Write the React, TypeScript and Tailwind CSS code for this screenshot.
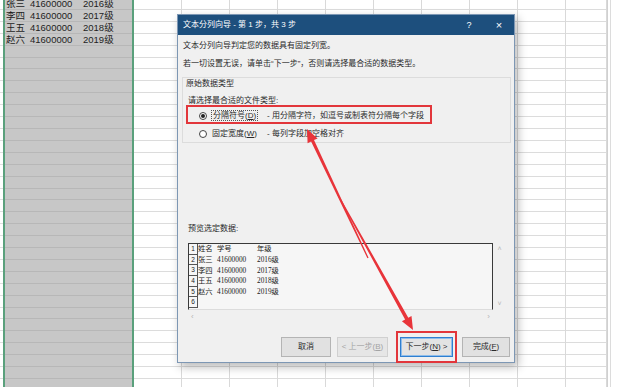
import React from "react"

const ROWS = Array.from({ length: 33 })
const sheetData: Record<number, [string, string, string]> = {
  0: ["张三", "41600000", "2016级"],
  1: ["李四", "41600000", "2017级"],
  2: ["王五", "41600000", "2018级"],
  3: ["赵六", "41600000", "2019级"],
}
const plainCols = [48, 48, 48, 48, 48, 48, 48, 48, 48, 41]

const preview: [string, string, string][] = [
  ["姓名", "学号", "年级"],
  ["张三", "41600000", "2016级"],
  ["李四", "41600000", "2017级"],
  ["王五", "41600000", "2018级"],
  ["赵六", "41600000", "2019级"],
  ["", "", ""],
]

const Sheet = () => (
  <div className="flex -mt-[2px]">
    <div className="w-[3px] shrink-0">
      {ROWS.map((_, i) => (
        <div key={i} className="h-[11.92px] border-b border-[#dedede]" />
      ))}
    </div>
    <div className="w-[131px] shrink-0 bg-[#c7c7c7] border-x-2 border-[#5aa07c]">
      {ROWS.map((_, i) => (
        <div
          key={i}
          className="h-[11.92px] border-b border-[#b7b7b7] flex items-end pl-[1px] text-[9.5px] leading-[11px] text-[#1e1e1e]"
        >
          {sheetData[i] && (
            <>
              <span className="w-[24px]">{sheetData[i][0]}</span>
              <span className="w-[53px]">{sheetData[i][1]}</span>
              <span>{sheetData[i][2]}</span>
            </>
          )}
        </div>
      ))}
    </div>
    {plainCols.map((w, c) => (
      <div key={c} className="shrink-0 border-r border-[#d9d9d9]" style={{ width: w }}>
        {ROWS.map((_, i) => (
          <div key={i} className="h-[11.92px] border-b border-[#dcdcdc]" />
        ))}
      </div>
    ))}
    <div className="w-[13px] shrink-0 border-l border-[#d0d0d0]">
      <div className="h-full w-[3px] border-r border-[#dcdcdc]" />
    </div>
  </div>
)

const Radio = ({ checked }: { checked?: boolean }) => (
  <span className="w-[8px] h-[8px] rounded-full border border-[#444] bg-white flex items-center justify-center shrink-0">
    {checked && <span className="w-[4px] h-[4px] rounded-full bg-[#222]" />}
  </span>
)

const Btn = ({
  children,
  className,
}: {
  children: React.ReactNode
  className: string
}) => (
  <div className={`h-[20px] flex items-center justify-center text-[8px] leading-[12px] ${className}`}>
    {children}
  </div>
)

const Dialog = () => (
  <div className="absolute left-[177px] top-[14px] w-[338px] h-[349px] border border-[#7d97b4] bg-[#f0f0f0] shadow-[3px_4px_9px_rgba(0,0,0,0.28)] flex flex-col text-[#2a2a2a] text-[8px] leading-[12px]">
    <div className="h-[20px] bg-[#1d4f7d] flex items-center pl-[5px] text-white shrink-0">
      <span>文本分列向导 - 第 1 步，共 3 步</span>
      <span className="ml-auto w-[10px] text-center text-[9px]">?</span>
      <span className="ml-[20px] mr-[10px] w-[10px] text-center text-[11px]">×</span>
    </div>

    <div className="pl-[5px] pt-[5px]">文本分列向导判定您的数据具有固定列宽。</div>
    <div className="pl-[5px] mt-[6px]">若一切设置无误，请单击“下一步”，否则请选择最合适的数据类型。</div>

    <div className="ml-[4px] mr-[3px] mt-[7px] h-[66px] border border-[#dcdcdc]">
      <div className="pl-[3px]">原始数据类型</div>
      <div className="pl-[5px] mt-[5px]">请选择最合适的文件类型:</div>
      <div className="flex items-center mt-[3px] pl-[16px]">
        <Radio checked />
        <div className="ml-[4px] w-[56px]">
          <span className="px-[1px] border border-dotted border-[#555]">
            分隔符号(<u>D</u>)
          </span>
        </div>
        <span>- 用分隔字符，如逗号或制表符分隔每个字段</span>
      </div>
      <div className="flex items-center mt-[6px] pl-[16px]">
        <Radio />
        <div className="ml-[5px] w-[55px]">
          固定宽度(<u>W</u>)
        </div>
        <span>- 每列字段加空格对齐</span>
      </div>
    </div>

    <div className="pl-[10px] mt-[80px]">预览选定数据:</div>
    <div className="ml-[10px] mt-[8px] grid grid-cols-[305px_13px] grid-rows-[67px_13px] w-[318px]">
      <div className="border-t border-x border-[#3a3a3a] border-b-[#dcdcdc] border-b bg-[#f6f6f6] overflow-hidden">
        {preview.map((r, i) => (
          <div key={i} className="h-[10.7px] flex items-center text-[7.3px] leading-[10px] text-[#222]">
            <span className="w-[9px] h-full border-r border-b border-[#555] flex items-center justify-center text-[6.5px] shrink-0">
              {i + 1}
            </span>
            <span className="w-[19px]">{r[0]}</span>
            <span className="w-[40px] font-['Liberation_Serif','Noto_Sans_CJK_SC',serif]">{r[1]}</span>
            <span className="font-['Liberation_Serif','Noto_Sans_CJK_SC',serif]">{r[2]}</span>
          </div>
        ))}
      </div>
      <div className="flex flex-col items-center justify-between py-[1px] text-[#b5b5b5] text-[7px] leading-[10px]">
        <span>˄</span>
        <span>˅</span>
      </div>
      <div className="flex items-center justify-between px-[3px] text-[#b5b5b5] text-[8px]">
        <span>‹</span>
        <span>›</span>
      </div>
      <div />
    </div>

    <div className="mt-auto mb-[5px] pr-[4px] flex justify-end">
      <Btn className="w-[50px] bg-[#e1e1e1] border border-[#b4b4b4]">取消</Btn>
      <Btn className="w-[51px] ml-[6px] bg-[#e6e6e6] border border-[#d0d0d0] text-[#a4a4a4]">
        &lt; 上一步(<u>B</u>)
      </Btn>
      <Btn className="w-[53px] ml-[12px] bg-[#e3e3e3] border border-[#2f7fd0] shadow-[inset_0_0_0_1px_#8fbdea]">
        下一步(<u>N</u>) &gt;
      </Btn>
      <Btn className="w-[48px] ml-[9px] bg-[#e1e1e1] border border-[#b4b4b4]">
        完成(<u>F</u>)
      </Btn>
    </div>
  </div>
)

const Marks = () => (
  <>
    <div className="absolute left-[186px] top-[105px] w-[246px] h-[19px] border-2 border-[#e2363b]" />
    <div className="absolute left-[396px] top-[331px] w-[61px] h-[32px] border-2 border-[#e2363b]" />
    <svg className="absolute inset-0" width="620" height="387" viewBox="0 0 620 387">
      <polygon
        fill="#e8343a"
        points="307,129 317.6,138.4 314,140.1 368.6,257.8 367.4,258.2 311.1,141.5 307.6,143.2"
      />
      <polygon
        fill="#e8343a"
        points="413,330 401.9,321.3 405.1,319.5 337.5,195.2 338.5,194.8 408.3,317.7 411.5,315.9"
      />
    </svg>
  </>
)

export default function App() {
  return (
    <div className="relative w-[620px] h-[387px] overflow-hidden bg-white font-['Liberation_Sans','Noto_Sans_CJK_SC',sans-serif]">
      <Sheet />
      <Dialog />
      <Marks />
    </div>
  )
}
